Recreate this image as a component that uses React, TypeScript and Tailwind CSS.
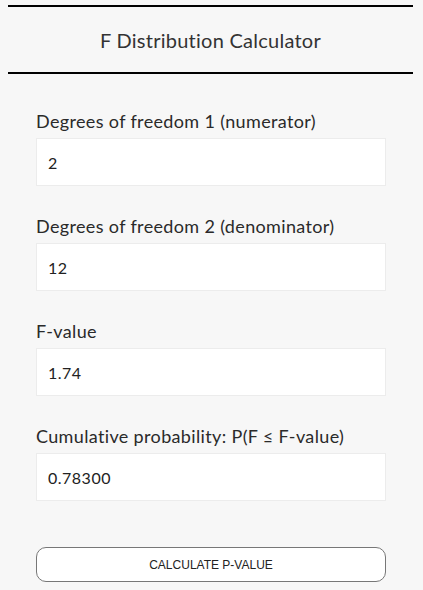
import React, { useState } from 'react';

interface FieldProps {
    label: React.ReactNode;
    value: string;
    onChange: (v: string) => void;
}

// Labelled text input used for each parameter
const Field: React.FC<FieldProps> = ({ label, value, onChange }) => (
    <div className="flex flex-col">
        <label className="h-[24px] leading-[24px] text-[18px] tracking-[0.35px] text-[#2a2a2a]">{label}</label>
        <input
            type="text"
            value={value}
            onChange={(e) => onChange(e.target.value)}
            className="mt-[5px] h-[48px] w-full border border-[#ececec] bg-white px-[11px] text-[16px] tracking-[0.5px] text-[#222] outline-none"
        />
    </div>
);

const App: React.FC = () => {
    const [df1, setDf1] = useState('2');
    const [df2, setDf2] = useState('12');
    const [fValue, setFValue] = useState('1.74');
    const [prob, setProb] = useState('0.78300');

    return (
        <div
            className="min-h-[590px] w-[423px] bg-[#f7f7f7] pt-[5px]"
            style={{ fontFamily: 'Lato, "Open Sans", sans-serif' }}
        >
            {/* Header */}
            <div className="ml-[8px] mr-[10px] border-y-2 border-black">
                <h1 className="flex h-[65px] items-center justify-center text-[20px] font-normal tracking-[0.25px] text-[#333]">
                    F Distribution Calculator
                </h1>
            </div>

            {/* Form */}
            <div className="ml-[36px] mr-[37px] mt-[35px] flex flex-col gap-[28px]">
                <Field label="Degrees of freedom 1 (numerator)" value={df1} onChange={setDf1} />
                <Field label="Degrees of freedom 2 (denominator)" value={df2} onChange={setDf2} />
                <Field label="F-value" value={fValue} onChange={setFValue} />
                <Field label="Cumulative probability: P(F ≤ F-value)" value={prob} onChange={setProb} />
            </div>

            <div className="ml-[36px] mr-[37px] mt-[46px]">
                <button
                    type="button"
                    className="h-[35px] w-full rounded-[10px] border border-[#777] bg-white text-[12px] text-[#222]"
                    style={{ fontFamily: '"Liberation Sans", Arial, sans-serif' }}
                >
                    CALCULATE P-VALUE
                </button>
            </div>
        </div>
    );
};

export default App;
